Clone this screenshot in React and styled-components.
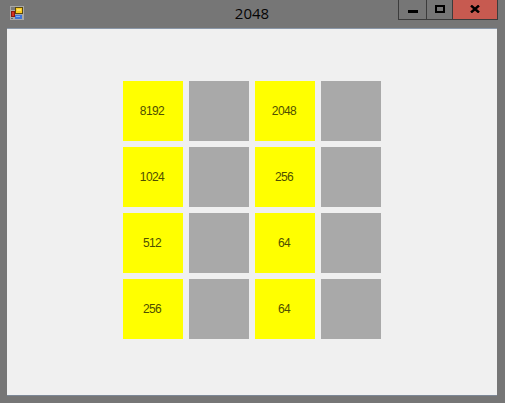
import React from "react";
import styled, { createGlobalStyle } from "styled-components";

const GlobalStyle = createGlobalStyle`
  html, body {
    margin: 0;
    padding: 0;
    background: #767676;
  }
`;

const Window = styled.div`
  width: 505px;
  height: 403px;
  display: flex;
  flex-direction: column;
  background: #767676;
  box-sizing: border-box;
  padding: 0 8px 7px 7px;
  overflow: hidden;
`;

const TitleBar = styled.div`
  height: 28px;
  flex: none;
  display: grid;
  grid-template-columns: 100px 1fr 100px;
  margin-right: -1px;
  margin-left: 3px;
`;

const AppIcon = styled.svg`
  width: 14px;
  height: 14px;
  margin-top: 6px;
  display: block;
`;

const Title = styled.div`
  font-family: "Open Sans", "Noto Sans", sans-serif;
  font-size: 15px;
  line-height: 27px;
  color: #050505;
  text-align: center;
  padding-right: 4px;
`;

const Controls = styled.div`
  display: flex;
  height: 20px;
  box-sizing: border-box;
  border: 1px solid #3c3c3c;
  border-top: none;
  width: 100px;
`;

const ControlButton = styled.div`
  width: ${({ $w }) => $w}px;
  flex: none;
  display: flex;
  align-items: flex-start;
  justify-content: center;
  padding-top: ${({ $top }) => $top}px;
  background: ${({ $close }) => ($close ? "#c75a50" : "transparent")};
  border-left: ${({ $first }) => ($first ? "none" : "1px solid #3c3c3c")};
  box-sizing: border-box;
  svg {
    display: block;
  }
`;

const Client = styled.div`
  flex: 1;
  background: #f0f0f0;
  border-top: 1px solid #8a97a8;
  border-bottom: 1px solid #7c8796;
  display: flex;
  justify-content: center;
  padding-top: 52px;
`;

const Board = styled.div`
  display: grid;
  grid-template-columns: repeat(4, 60px);
  grid-auto-rows: 60px;
  gap: 6px;
  align-content: start;
`;

const Tile = styled.div`
  display: flex;
  align-items: center;
  justify-content: center;
  background: ${({ $filled }) => ($filled ? "#ffff00" : "#a9a9a9")};
  color: #4f4f00;
  font-family: "Liberation Sans", Arial, sans-serif;
  font-size: 12px;
  letter-spacing: -0.6px;
  padding-right: 2px;
`;

const tiles = [
  8192, null, 2048, null,
  1024, null, 256, null,
  512, null, 64, null,
  256, null, 64, null,
];

export default function App() {
  return (
    <>
      <GlobalStyle />
      <Window>
        <TitleBar>
          <AppIcon viewBox="0 0 14 14">
            <rect width="14" height="14" fill="#a8a8a8" />
            <rect x="1" y="1" width="4" height="3" fill="#7a7a7a" />
            <rect x="5" y="1" width="8" height="7" fill="#5a4a10" />
            <rect x="6" y="2" width="6" height="5" fill="#fbcb22" />
            <rect x="7" y="3" width="4" height="2" fill="#ffe060" />
            <rect x="1" y="5" width="4" height="6" fill="#8a1a10" />
            <rect x="2" y="6" width="2" height="4" fill="#d83020" />
            <rect x="5" y="9" width="7" height="4" fill="#3f74d8" />
            <rect x="6" y="10" width="4" height="1" fill="#86b0f0" />
            <rect x="1" y="12" width="2" height="1" fill="#6a6a6a" />
            <rect x="13" y="9" width="1" height="5" fill="#a8a8a8" />
          </AppIcon>
          <Title>2048</Title>
          <Controls>
            <ControlButton $w={27} $top={10} $first>
              <svg width="10" height="3" viewBox="0 0 10 3">
                <rect width="10" height="3" fill="#000" />
              </svg>
            </ControlButton>
            <ControlButton $w={26} $top={5}>
              <svg width="10" height="8" viewBox="0 0 10 8">
                <rect x="1" y="1" width="8" height="6" fill="none" stroke="#000" strokeWidth="2" />
              </svg>
            </ControlButton>
            <ControlButton $w={45} $top={5} $close>
              <svg width="10" height="8" viewBox="0 0 10 8">
                <path d="M1 0.5 L9 7.5 M9 0.5 L1 7.5" stroke="#000" strokeWidth="2.4" fill="none" />
              </svg>
            </ControlButton>
          </Controls>
        </TitleBar>
        <Client>
          <Board>
            {tiles.map((value, i) => (
              <Tile key={i} $filled={value !== null}>
                {value}
              </Tile>
            ))}
          </Board>
        </Client>
      </Window>
    </>
  );
}
